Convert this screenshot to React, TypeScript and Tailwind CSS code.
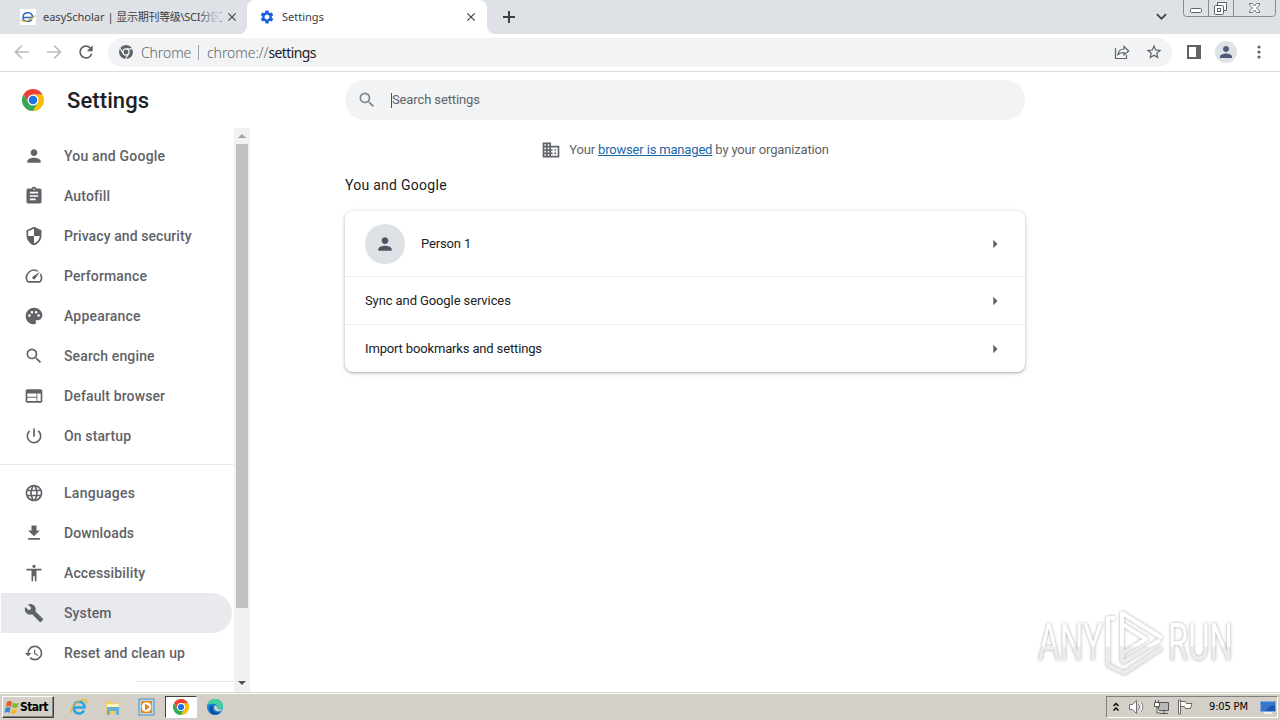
import type { ReactNode } from "react"
import type { IconType } from "react-icons"
import {
   MdAccessibility,
   MdArrowRight,
   MdAssignment,
   MdBuild,
   MdBusiness,
   MdClose,
   MdFileDownload,
   MdHistory,
   MdLanguage,
   MdPalette,
   MdPerson,
   MdPowerSettingsNew,
   MdRefresh,
   MdSearch,
   MdSecurity,
   MdSettings,
   MdSpeed,
   MdStarBorder,
   MdWeb,
} from "react-icons/md"

type MenuItem = {
   label: string
   icon: IconType
   tracking: string
   active?: boolean
}

const mainItems: MenuItem[] = [
   { label: "You and Google", icon: MdPerson, tracking: "tracking-[0.2px]" },
   { label: "Autofill", icon: MdAssignment, tracking: "tracking-[0.13px]" },
   { label: "Privacy and security", icon: MdSecurity, tracking: "tracking-[0.08px]" },
   { label: "Performance", icon: MdSpeed, tracking: "tracking-[0.13px]" },
   { label: "Appearance", icon: MdPalette, tracking: "tracking-[0.2px]" },
   { label: "Search engine", icon: MdSearch, tracking: "tracking-[0.13px]" },
   { label: "Default browser", icon: MdWeb, tracking: "tracking-[0.13px]" },
   { label: "On startup", icon: MdPowerSettingsNew, tracking: "tracking-[0.13px]" },
]

const advancedItems: MenuItem[] = [
   { label: "Languages", icon: MdLanguage, tracking: "tracking-[0.28px]" },
   { label: "Downloads", icon: MdFileDownload, tracking: "tracking-[0.08px]" },
   { label: "Accessibility", icon: MdAccessibility, tracking: "tracking-[0.13px]" },
   { label: "System", icon: MdBuild, tracking: "tracking-[0.13px]", active: true },
   { label: "Reset and clean up", icon: MdHistory, tracking: "tracking-[0.13px]" },
]

function ChromeLogo({ className }: { className?: string }) {
   return (
      <svg viewBox="0 0 48 48" className={className}>
         <path fill="#fbbc04" d="M24 12h20.8A24 24 0 0 1 24 48l10.4-18z" />
         <path fill="#34a853" d="M3.2 12A24 24 0 0 0 24 48l10.4-18L24 24l-10.4 6z" />
         <path fill="#ea4335" d="M3.2 12 13.6 30 24 24V12h20.8A24 24 0 0 0 3.2 12z" />
         <circle cx="24" cy="24" r="12" fill="#fff" />
         <circle cx="24" cy="24" r="9.3" fill="#1a73e8" />
      </svg>
   )
}

function GrayChromeLogo() {
   return (
      <svg viewBox="0 0 48 48" className="size-[14px]">
         <circle cx="24" cy="24" r="24" fill="#5f6368" />
         <circle cx="24" cy="24" r="10.5" fill="none" stroke="#f1f3f4" strokeWidth="4" />
         <path d="M24 13.5h22M15 29.5 4 11M33 29.5 22.500 48" stroke="#f1f3f4" strokeWidth="4" />
      </svg>
   )
}

function WindowButtons() {
   return (
      <svg viewBox="0 0 94 18" className="h-[18px] w-[94px] shrink-0" fill="none">
         <path d="M.5 0v13.500q0 3 3 3h86q3 0 3-3V0M25.500 0v16M50.500 0v16" stroke="#868b94" />
         <rect x="7.500" y="8.500" width="11" height="4" rx="1" fill="#fff" stroke="#5d626b" />
         <path d="M34.500 5.500v-3h9v8h-3" fill="#fff" stroke="#5d626b" />
         <rect x="31.500" y="5.500" width="9" height="9" rx="1" fill="#fff" stroke="#5d626b" />
         <rect x="34.500" y="8.500" width="3" height="3" stroke="#5d626b" />
         <path d="M66.500 3.500h3l2 2.500 2-2.500h3v1.500l-3 3 3 3v1.500h-3l-2-2.500-2 2.500h-3V11l3-3-3-3z" fill="#fff" stroke="#6c717a" />
      </svg>
   )
}

function TabStrip() {
   return (
      <div className="flex h-[34px] shrink-0 bg-white font-['Noto_Sans','Noto_Sans_CJK_SC',sans-serif] text-[11px] text-[#3c4043]">
         <div className="flex w-[247px] items-center rounded-br-lg bg-[#dee1e6] pl-5">
            <svg viewBox="0 0 16 16" className="size-4 shrink-0">
               <rect width="16" height="16" fill="#fff" />
               <path d="M3 8.500h9.500c.2-6-9-6.500-9.500-.5-.2 5.300 6.500 5.500 9 2.500" fill="none" stroke="#3568b8" strokeWidth="1.500" />
               <path d="M.5 10.500c2 3.500 9.500 1.500 15-4" fill="none" stroke="#d9b35a" strokeWidth="1.200" />
            </svg>
            <div className="relative ml-[7px] w-[177px] whitespace-nowrap">
               <span>easyScholar | </span>
               <span className="tracking-[-0.3px]">显示期刊等级\SCI分区</span>
               <span className="absolute inset-y-0 right-0 w-5 bg-linear-to-r from-transparent to-[#dee1e6]" />
            </div>
            <MdClose className="ml-[5px] size-[14px] shrink-0" />
         </div>
         <div className="flex bg-[#dee1e6]">
            <div className="flex w-[240px] items-center rounded-t-lg bg-white pl-3">
               <MdSettings className="size-4 text-[#1a5fe0]" />
               <span className="ml-[7px] flex-1">Settings</span>
               <MdClose className="mr-[9px] size-[14px]" />
            </div>
         </div>
         <div className="flex flex-1 items-center rounded-bl-lg bg-[#dee1e6] pl-[15px]">
            <svg viewBox="0 0 14 14" className="size-[14px]" stroke="#3c4043" strokeWidth="2">
               <path d="M7 1v12M1 7h12" />
            </svg>
            <svg viewBox="0 0 12 8" className="mr-4 mb-px ml-auto size-[11px]" stroke="#3c4043" strokeWidth="2" fill="none">
               <path d="m1 1.500 5 5 5-5" />
            </svg>
            <div className="flex h-full items-start pr-[3px]">
               <WindowButtons />
            </div>
         </div>
      </div>
   )
}

function NavArrow({ flipped }: { flipped?: boolean }) {
   return (
      <svg viewBox="0 0 16 16" className={flipped ? "size-4 rotate-180" : "size-4"} fill="none" stroke="#babcbe" strokeWidth="1.700">
         <path d="M15 8H2M8 1.500 1.500 8 8 14.500" />
      </svg>
   )
}

function Toolbar() {
   return (
      <div className="flex h-[38px] shrink-0 items-center border-b border-[#dadce0] bg-white pb-px pl-[14px] text-[#5f6368]">
         <NavArrow />
         <div className="w-4" />
         <NavArrow flipped />
         <MdRefresh className="ml-[14px] size-5" />
         <div className="ml-3 flex h-[29px] w-[1064px] items-center rounded-full bg-[#f1f3f4] pl-[11px] font-['Noto_Sans','Open_Sans',sans-serif] text-[14px]">
            <GrayChromeLogo />
            <span className="ml-2 w-[50px] whitespace-nowrap font-light tracking-[-0.1px]">Chrome</span>
            <span className="ml-[7px] h-[15px] w-px bg-[#9aa0a6]" />
            <span className="ml-2 whitespace-nowrap font-light tracking-[-0.05px]">
               chrome://<span className="font-normal text-[#202124] tracking-[-0.6px]">settings</span>
            </span>
            <svg viewBox="0 0 16 16" className="mr-[15px] ml-auto size-4" fill="none" stroke="#5f6368" strokeWidth="1.200">
               <path d="M1.500 4v10.500h11V11" />
               <path d="M4 10.500c.5-4 3-5.500 6-5.500V2.500L14.700 7 10 11V8.500c-2.500 0-4.500.3-6 2z" />
            </svg>
            <MdStarBorder className="mr-[9px] size-[18px]" />
         </div>
         <svg viewBox="0 0 14 14" className="ml-[15px] size-[14px]">
            <path d="M1 1h12v12H1z" fill="none" stroke="#5f6368" strokeWidth="2" />
            <path d="M9 1h4v12H9z" fill="#5f6368" />
         </svg>
         <div className="ml-[14px] flex size-[22px] items-center justify-center rounded-full bg-[#dee1e6]">
            <MdPerson className="size-[18px] text-[#4f5b76]" />
         </div>
         <svg viewBox="0 0 4 14" className="ml-5 h-[14px] w-1" fill="#5f6368">
            <circle cx="2" cy="2" r="1.600" />
            <circle cx="2" cy="7" r="1.600" />
            <circle cx="2" cy="12" r="1.600" />
         </svg>
      </div>
   )
}

function MenuRow({ item }: { item: MenuItem }) {
   const Icon = item.icon

   return (
      <div className={`ml-px flex h-10 w-[231px] shrink-0 items-center rounded-r-full pl-[23px] ${item.active ? "bg-[#e8eaed]" : ""}`}>
         <Icon className="size-5 text-[#5f6368]" />
         <span className={`ml-5 whitespace-nowrap text-[14px] font-medium text-[#5f6368] ${item.tracking}`}>
            {item.label}
         </span>
      </div>
   )
}

function Sidebar() {
   return (
      <div className="flex w-[250px] shrink-0 flex-col">
         <div className="flex h-14 shrink-0 items-center pl-[22px]">
            <ChromeLogo className="size-[22px]" />
            <h1 className="ml-[23px] text-[22px] font-medium tracking-[0.1px] text-[#202124]">Settings</h1>
         </div>

         <div className="flex min-h-0 flex-1">
            {/* Menu */}
            <div className="flex w-[234px] flex-col overflow-hidden pt-2">
               {mainItems.map(item => <MenuRow key={item.label} item={item} />)}
               <div className="mt-2 mb-2 h-px shrink-0 bg-[#e8eaed]" />
               {advancedItems.map(item => <MenuRow key={item.label} item={item} />)}
               <div className="mt-2 ml-[136px] h-px shrink-0 bg-[#e8eaed]" />
            </div>

            {/* Scrollbar */}
            <div className="flex w-4 flex-col items-center bg-[#f1f1f1]">
               <div className="flex h-4 items-center justify-center">
                  <svg viewBox="0 0 8 4" className="h-1 w-2"><path d="M0 4 4 0l4 4z" fill="#a0a0a0" /></svg>
               </div>
               <div className="h-[464px] w-3 bg-[#c1c1c1]" />
               <div className="mt-auto flex h-[18px] items-center justify-center">
                  <svg viewBox="0 0 8 4" className="h-1 w-2"><path d="m0 0 4 4 4-4z" fill="#505050" /></svg>
               </div>
            </div>
         </div>
      </div>
   )
}

function CardRow({ children, className }: { children: ReactNode, className: string }) {
   return (
      <div className={`flex items-center pl-5 ${className}`}>
         {children}
         <MdArrowRight className="mr-5 ml-auto size-5 text-[#5f6368]" />
      </div>
   )
}

function Watermark() {
   return (
      <svg viewBox="0 0 204 74" className="absolute top-[532px] left-[1034px] h-[74px] w-[204px] drop-shadow-[0_0_1.5px_#a8a8a8]">
         <defs>
            <linearGradient id="shine" x1="0" y1="0" x2="0" y2="74" gradientUnits="userSpaceOnUse">
               <stop offset="0.57" stopColor="#fff" />
               <stop offset="0.58" stopColor="#ececec" />
            </linearGradient>
         </defs>
         <g fill="url(#shine)" className="font-['Roboto',sans-serif] text-[52px]">
            <text x="4" y="56" textLength="65" lengthAdjust="spacingAndGlyphs">ANY</text>
            <text x="134" y="56" textLength="65" lengthAdjust="spacingAndGlyphs">RUN</text>
         </g>
         <g fill="none" stroke="url(#shine)" strokeWidth="4" strokeLinejoin="round">
            <path d="M88 58V9l40 25" />
            <path d="M81 14H74v47l16 8 38-25" />
            <path d="M88 59l38-23M88 20v30l24-15z" />
         </g>
      </svg>
   )
}

function TaskbarIcons() {
   return (
      <div className="flex items-center">
         <svg viewBox="0 0 18 18" className="ml-4 size-[18px]" fill="none">
            <path d="M3.500 9.500h11C14.500 1.500 4 2 3.700 9.500c-.2 7 8 7.500 10.300 3" stroke="#28a5e4" strokeWidth="2.600" />
            <path d="M1 15C0 9 10 0 16 2c1 .7.500 2 0 3" stroke="#e6b72b" strokeWidth="1.300" />
         </svg>
         <svg viewBox="0 0 18 18" className="ml-4 size-[18px]">
            <path d="M2 3h5l1 2h8v11H2z" fill="#efcf63" />
            <path d="M3 6h12v4H3z" fill="#fff5bf" />
            <path d="M3 9h12v8h-3v-4H6v4H3z" fill="#68afd4" />
         </svg>
         <svg viewBox="0 0 18 18" className="ml-4 size-[18px]">
            <rect x="1" y="1" width="15" height="16" fill="#b9d8ee" stroke="#4d91bd" />
            <path d="M3 3h11v12H3z" fill="#f28a15" />
            <circle cx="8.500" cy="9" r="4.800" fill="#fff" />
            <path d="m7 5.500 5 3.500-5 3.500z" fill="#f07c10" />
         </svg>
         <div className="ml-[9px] flex h-[22px] w-8 items-center justify-center border border-t-[#404040] border-r-white border-b-white border-l-[#404040] bg-white">
            <ChromeLogo className="size-4" />
         </div>
         <svg viewBox="0 0 18 18" className="ml-[9px] size-[18px]">
            <circle cx="9" cy="9" r="8" fill="#137bd0" />
            <path d="M1.500 7C3-1 16-1 17 8c0 4-5 4-6 3 2-4-4-7-9.500-4z" fill="#42cfa0" />
            <path d="M7 8c-2 4 2 8 7 6-4 5-11 2-10-3 0-2 1-3 3-3z" fill="#0b4da2" />
            <path d="M8 9c0 4 4 5 7 4l2-2c-3 1-6 1-6-2 0-1-3-2-3 0z" fill="#d6d2ca" />
         </svg>
      </div>
   )
}

function Taskbar() {
   return (
      <div className="flex h-7 shrink-0 items-center border-t border-[#d4d0c8] bg-[#d4d0c8] font-['DejaVu_Sans_Condensed','DejaVu_Sans',sans-serif] text-[11px] text-black shadow-[inset_0_1px_0_#fff]">
         <div className="ml-[2px] flex h-[22px] w-[52px] items-center border border-t-white border-r-[#404040] border-b-[#404040] border-l-white pl-px shadow-[inset_-1px_-1px_0_#808080]">
            <svg viewBox="0 0 16 16" className="size-4 shrink-0">
               <path d="M3 3q3-2 5 0L7 8Q4 6 2 8z" fill="#ec5a24" />
               <path d="M9 3.500q3 2 6 0L13.500 8q-3 2-5.500 0z" fill="#80ba32" />
               <path d="M1.500 9q3-2 5 0l-1 5q-3-2-5 0z" fill="#368bd7" />
               <path d="M8 9.500q3 2 5 0l-1 4.500q-3 2-5 0z" fill="#f5b820" />
            </svg>
            <span className="pt-px text-[12px] font-bold tracking-[-0.6px]">Start</span>
         </div>
         <TaskbarIcons />

         {/* Tray */}
         <div className="mr-[2px] ml-auto flex h-[22px] w-[172px] items-center border border-t-[#808080] border-r-white border-b-white border-l-[#808080] pl-[6px]">
            <svg viewBox="0 0 6 10" className="h-[10px] w-[6px]" fill="none" stroke="#000" strokeWidth="1.400">
               <path d="m.5 4 2.500-2.500L5.500 4M.5 8.500 3 6l2.500 2.500" />
            </svg>
            <svg viewBox="0 0 17 16" className="ml-[9px] h-4 w-[17px]" fill="none" stroke="#707070">
               <path d="M1.500 5.500h3l4-4v13l-4-4h-3z" fill="#fff" />
               <path d="M10.500 5q2 3 0 6M12.500 3q4 5 0 10" stroke="#fff" strokeWidth="2" />
               <path d="M10.500 5q2 3 0 6M13 3q4 5 0 10" />
            </svg>
            <svg viewBox="0 0 17 16" className="ml-2 h-4 w-[17px]" fill="#fff" stroke="#555">
               <path d="M5.500 3.500h10v8h-10z" fill="#b8b8b8" />
               <path d="M7 14.500h8M11 12v2" />
               <path d="M1.500 3.500h5v4h-5zM2.500 1v2M5.500 1v2M4 8v6h3" />
            </svg>
            <svg viewBox="0 0 17 16" className="ml-[7px] h-4 w-[17px]" fill="#fff" stroke="#666">
               <path d="M1.500 1v14h2V1zM3.500 2.500h5l1 2h5.500l-1.500 5h-5l-1-2h-4z" />
            </svg>
            <span className="ml-[15px] pt-px whitespace-nowrap tracking-[-0.15px]">9:05 PM</span>
            <svg viewBox="0 0 16 14" className="mr-px ml-auto h-[14px] w-4">
               <path d="M.5 1.500h15v10H.5z" fill="#1c55b5" stroke="#7eaada" />
               <path d="M1 2h14v3q-6 0-9 6H1z" fill="#3975cf" />
               <path d="M4 13h8" stroke="#efefef" strokeWidth="2" />
            </svg>
         </div>
      </div>
   )
}

export default function App() {
   return (
      <div className="flex h-[720px] w-[1280px] flex-col overflow-hidden bg-white">
         <TabStrip />
         <Toolbar />

         <div className="relative flex min-h-0 flex-1 font-['Roboto',sans-serif]">
            <Sidebar />

            <div className="ml-[95px] w-[680px] pt-2">
               {/* Search */}
               <div className="flex h-10 items-center rounded-full bg-[#f1f3f4] pl-3 text-[#5f6368]">
                  <MdSearch className="size-5 text-[#80868b]" />
                  <span className="ml-[14px] h-[15px] w-px bg-[#1a56b8]" />
                  <span className="text-[13px] tracking-[-0.12px]">Search settings</span>
               </div>

               {/* Managed notice */}
               <div className="mt-5 flex h-5 items-center justify-center text-[13px] text-[#5f6368]">
                  <MdBusiness className="mr-2 size-5" />
                  <span className="tracking-[-0.17px]">
                     Your <a className="text-[#1967a8] underline">browser is managed</a> by your organization
                  </span>
               </div>

               <h2 className="mt-[15px] h-5 text-[14px] leading-5 tracking-[0.27px] text-[#202124]">You and Google</h2>

               {/* Profile card */}
               <div className="mt-4 rounded-lg bg-white text-[13px] text-[#202124] shadow-[0_1px_2px_rgba(60,64,67,0.3),0_1px_4px_1px_rgba(60,64,67,0.15)]">
                  <CardRow className="h-[65px]">
                     <div className="flex size-10 items-center justify-center rounded-full bg-[#dee1e6]">
                        <MdPerson className="size-5 text-[#4d5562]" />
                     </div>
                     <span className="ml-4 tracking-[-0.15px]">Person 1</span>
                  </CardRow>
                  <CardRow className="h-12 border-t border-[#eceef0]">
                     <span className="tracking-[-0.1px]">Sync and Google services</span>
                  </CardRow>
                  <CardRow className="h-12 border-t border-[#eceef0]">
                     <span className="tracking-[-0.15px]">Import bookmarks and settings</span>
                  </CardRow>
               </div>
            </div>

            <Watermark />
         </div>

         <Taskbar />
      </div>
   )
}
